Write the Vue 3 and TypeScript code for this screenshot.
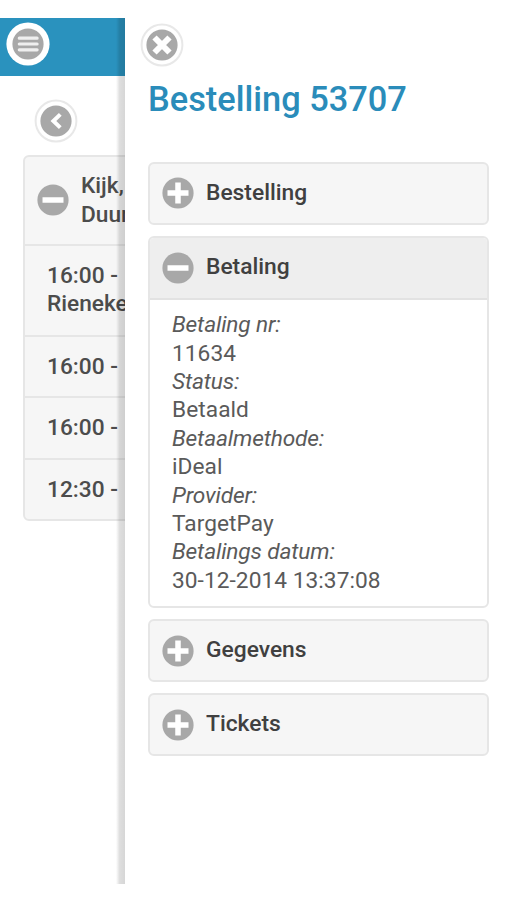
<script setup lang="ts">
interface Detail { label: string; value: string }
interface Section { title: string; open: boolean; details: Detail[] }

const sections: Section[] = [
  { title: 'Bestelling', open: false, details: [] },
  {
    title: 'Betaling',
    open: true,
    details: [
      { label: 'Betaling nr:', value: '11634' },
      { label: 'Status:', value: 'Betaald' },
      { label: 'Betaalmethode:', value: 'iDeal' },
      { label: 'Provider:', value: 'TargetPay' },
      { label: 'Betalings datum:', value: '30-12-2014 13:37:08' },
    ],
  },
  { title: 'Gegevens', open: false, details: [] },
  { title: 'Tickets', open: false, details: [] },
]

const rows: string[][] = [['16:00 -', 'Rieneke'], ['16:00 -'], ['16:00 -'], ['12:30 -']]
</script>

<template>
  <div class="screen">
    <main class="page">
      <header class="bar">
        <svg class="round" viewBox="0 0 44 44" aria-label="Menu">
          <circle cx="22" cy="22" r="21.6" fill="#fff" />
          <circle cx="22" cy="22" r="15.6" fill="#a8a8a8" />
          <path d="M13.3 16.2h17.8M13.3 22h17.8M13.3 27.8h17.8" stroke="#efefef" stroke-width="3.2" stroke-linecap="round" />
        </svg>
      </header>
      <div class="back">
        <svg class="round" viewBox="0 0 44 44" aria-label="Terug">
          <circle cx="22" cy="22" r="20.4" fill="#fff" stroke="#e8e8e8" stroke-width="2" />
          <circle cx="22" cy="22" r="15.6" fill="#a8a8a8" />
          <path d="M26.3 15.4 19.4 22l6.9 6.6" fill="none" stroke="#fff" stroke-width="4" />
        </svg>
      </div>
      <ul class="shows">
        <li class="head">
          <svg class="mark" viewBox="0 0 32 32">
            <circle cx="16" cy="16" r="15.6" fill="#a8a8a8" />
            <path d="M5.5 16h21" stroke="#fff" stroke-width="5.5" />
          </svg>
          <span>Kijk,<br />Duur</span>
        </li>
        <li v-for="(row, i) in rows" :key="i" :class="'row-' + i">
          <span v-for="line in row" :key="line" class="line">{{ line }}</span>
        </li>
      </ul>
    </main>

    <aside class="panel">
      <svg class="round close" viewBox="0 0 44 44" aria-label="Sluiten">
        <circle cx="22" cy="22" r="20.4" fill="#fff" stroke="#e8e8e8" stroke-width="2" />
        <circle cx="22" cy="22" r="15.6" fill="#a8a8a8" />
        <path d="m14.5 14.5 15 15m0-15-15 15" stroke="#fff" stroke-width="6" />
      </svg>
      <h1>Bestelling 53707</h1>
      <section v-for="s in sections" :key="s.title" class="card" :class="{ open: s.open }">
        <h2>
          <svg class="mark" viewBox="0 0 32 32">
            <circle cx="16" cy="16" r="15.6" fill="#a8a8a8" />
            <path :d="s.open ? 'M5.5 16h21' : 'M5.5 16h21M16 5.5v21'" stroke="#fff" stroke-width="5.5" />
          </svg>
          <span>{{ s.title }}</span>
        </h2>
        <dl v-if="s.open">
          <template v-for="d in s.details" :key="d.label">
            <dt>{{ d.label }}</dt>
            <dd>{{ d.value }}</dd>
          </template>
        </dl>
      </section>
    </aside>
  </div>
</template>

<style>
body { background: #fff; }
</style>

<style scoped>
* { box-sizing: border-box; }
.screen {
  display: flex;
  height: 900px;
  overflow: hidden;
  padding-top: 17.5px;
  font-family: Roboto, "Liberation Sans", sans-serif;
  font-size: 22.7px;
  line-height: 28.4px;
  color: #4c4c4c;
}
.page {
  position: relative;
  width: 125px;
  height: 866px;
  flex: none;
  overflow: hidden;
}
.page::after {
  content: "";
  position: absolute;
  top: 0;
  right: 0;
  width: 9px;
  height: 100%;
  background: linear-gradient(to right, rgba(0, 0, 0, 0), rgba(0, 0, 0, 0.13) 40%, rgba(0, 0, 0, 0.16));
}
.round { display: block; width: 44px; height: 44px; flex: none; }
.mark { display: block; width: 32px; height: 32px; flex: none; }
.bar { height: 58.5px; padding: 4.5px 0 0 6px; background: #2a92be; }
.back { padding: 22.5px 0 0 33.5px; }
.shows {
  width: 300px;
  height: 366px;
  margin: 12px 0 0 22.5px;
  padding: 0;
  list-style: none;
  border: 2px solid #e6e6e6;
  border-radius: 6px;
  background: #f6f6f6;
  font-weight: 500;
}
.shows li { height: 62px; padding: 16.2px 0 0 22.5px; border-top: 2px solid #e6e6e6; white-space: nowrap; }
.shows .head { display: flex; align-items: center; gap: 12.5px; height: 87px; padding: 0 0 0 12px; border-top: 0; }
.shows .head span { padding-top: 1px; }
.shows .row-0 { height: 91px; }
.shows .row-1 { height: 61px; }
.line { display: block; }
.panel { flex: 1; padding: 5.5px 17px 0 23px; }
.close { margin-left: -8px; }
h1 {
  margin: 11px 0 42px;
  font-size: 34.4px;
  font-weight: 500;
  line-height: 42px;
  color: #2a8cba;
  white-space: nowrap;
}
.card {
  width: 341px;
  margin-bottom: 11.4px;
  border: 2px solid #e6e6e6;
  border-radius: 6px;
  background: #f6f6f6;
}
.card.open { background: #fff; }
h2 {
  display: flex;
  align-items: center;
  gap: 12px;
  height: 58.7px;
  margin: 0;
  padding-left: 12px;
  font-size: 22.8px;
  font-weight: 500;
  color: #404040;
}
h2 span { margin-top: -0.4px; }
.open h2 { height: 61.7px; border-bottom: 2px solid #e2e2e2; border-radius: 4px 4px 0 0; background: #eee; }
.open h2 span { margin-top: -1.4px; }
dl { height: 306px; margin: 0; padding: 11.4px 0 0 22px; color: #5a5a5a; }
dt { font-style: italic; letter-spacing: -0.15px; }
dd { margin: 0; letter-spacing: 0.05px; }
</style>
